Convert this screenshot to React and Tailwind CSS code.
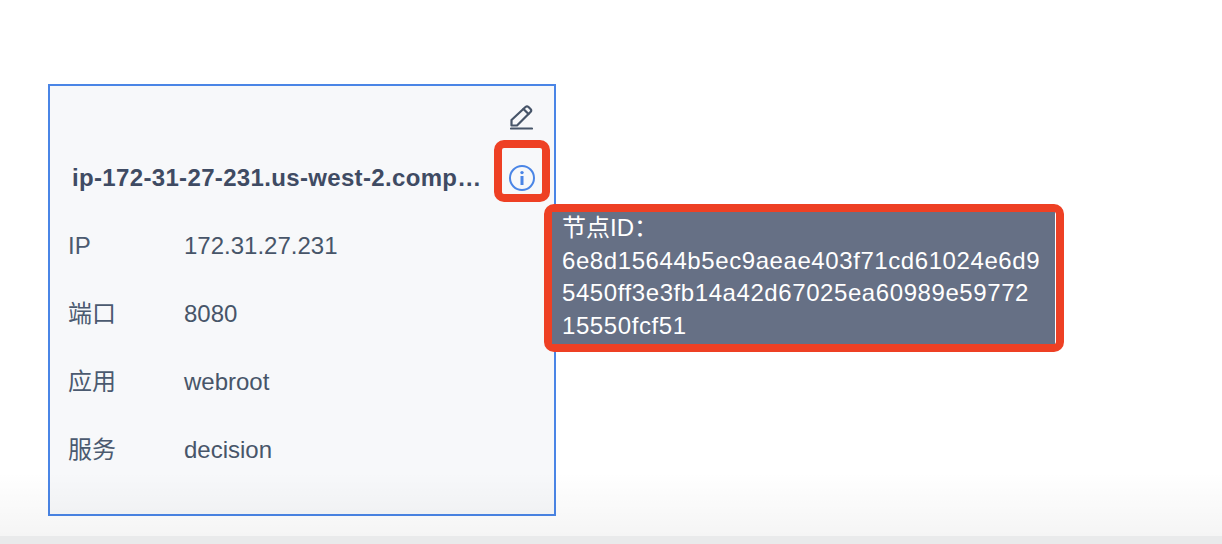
const rows = [
  { label: 'IP', value: '172.31.27.231' },
  { label: '端口', value: '8080' },
  { label: '应用', value: 'webroot' },
  { label: '服务', value: 'decision' },
];

const idLines = [
  '6e8d15644b5ec9aeae403f71cd61024e6d9',
  '5450ff3e3fb14a42d67025ea60989e59772',
  '15550fcf51',
];

const EditIcon = () => (
  <svg width="23" height="25" viewBox="0 0 23 25" fill="none" stroke="#475569" strokeWidth="2.2" strokeLinejoin="round" strokeLinecap="round">
    <path d="M1.5 20.5 V15 L15.5 2 Q17 0.8 18.5 2 L20.5 4 Q22 5.5 20.5 7 L7 20.5 Z" />
    <path d="M13.5 4 L18.5 9" />
    <path d="M1 23.5 H22" />
  </svg>
);

const InfoIcon = () => (
  <svg width="28" height="28" viewBox="0 0 28 28" fill="none" stroke="#4a85e6">
    <circle cx="14" cy="14" r="12" strokeWidth="2" />
    <circle cx="14" cy="8.6" r="1.7" fill="#4a85e6" stroke="none" />
    <path d="M14 12 V21" strokeWidth="3" />
  </svg>
);

export default function App() {
  return (
    <div className="relative h-[544px] w-full overflow-hidden bg-white font-['Liberation_Sans','Noto_Sans_CJK_SC',sans-serif] text-[#475569]">
      <div className="pl-12 pt-[84px]">
        {/* Node card */}
        <div className="h-[432px] w-[508px] border-2 border-[#4a85e6] bg-[#f7f8fa] pl-[18px]">
          <div className="flex h-[50px] justify-end pr-[21px] pt-[19px]">
            <EditIcon />
          </div>
          <div className="mt-[8px] flex h-[68px] items-center">
            <div className="ml-1 w-[410px] whitespace-nowrap text-[24px] font-bold leading-[32px] tracking-[0.34px] text-[#3f4b63]">
              ip-172-31-27-231.us-west-2.comp…
            </div>
            <span className="ml-[26px]">
              <InfoIcon />
            </span>
          </div>
          <div>
            {rows.map((row) => (
              <div key={row.label} className="flex h-[68px] items-center text-[24px] leading-[32px]">
                <span className="w-[116px] shrink-0 text-[#4b5a70]">{row.label}</span>
                <span className="text-[#475569]">{row.value}</span>
              </div>
            ))}
          </div>
        </div>
      </div>

      {/* Annotation around the info icon */}
      <div className="absolute left-[494px] top-[140px] h-[62px] w-[56px] rounded-[10px] border-[8px] border-[#ee4024]" />

      {/* Tooltip with annotation border */}
      <div className="absolute left-[544px] top-[204px] h-[148px] w-[520px] rounded-[10px] border-[8px] border-[#ee4024] bg-white">
        <div className="h-full w-[503px] bg-[#667085] pl-[10px] text-[24px] leading-[32.5px] text-white">
          <div>节点ID：</div>
          {idLines.map((line) => (
            <div key={line} className="whitespace-nowrap tracking-[0.58px]">{line}</div>
          ))}
        </div>
      </div>

      {/* Bottom fade */}
      <div className="pointer-events-none absolute bottom-[8px] left-0 right-0 h-[64px] bg-gradient-to-b from-transparent to-black/4" />
      <div className="absolute bottom-0 left-0 right-0 h-[8px] bg-[#e9eaeb]" />
    </div>
  );
}
